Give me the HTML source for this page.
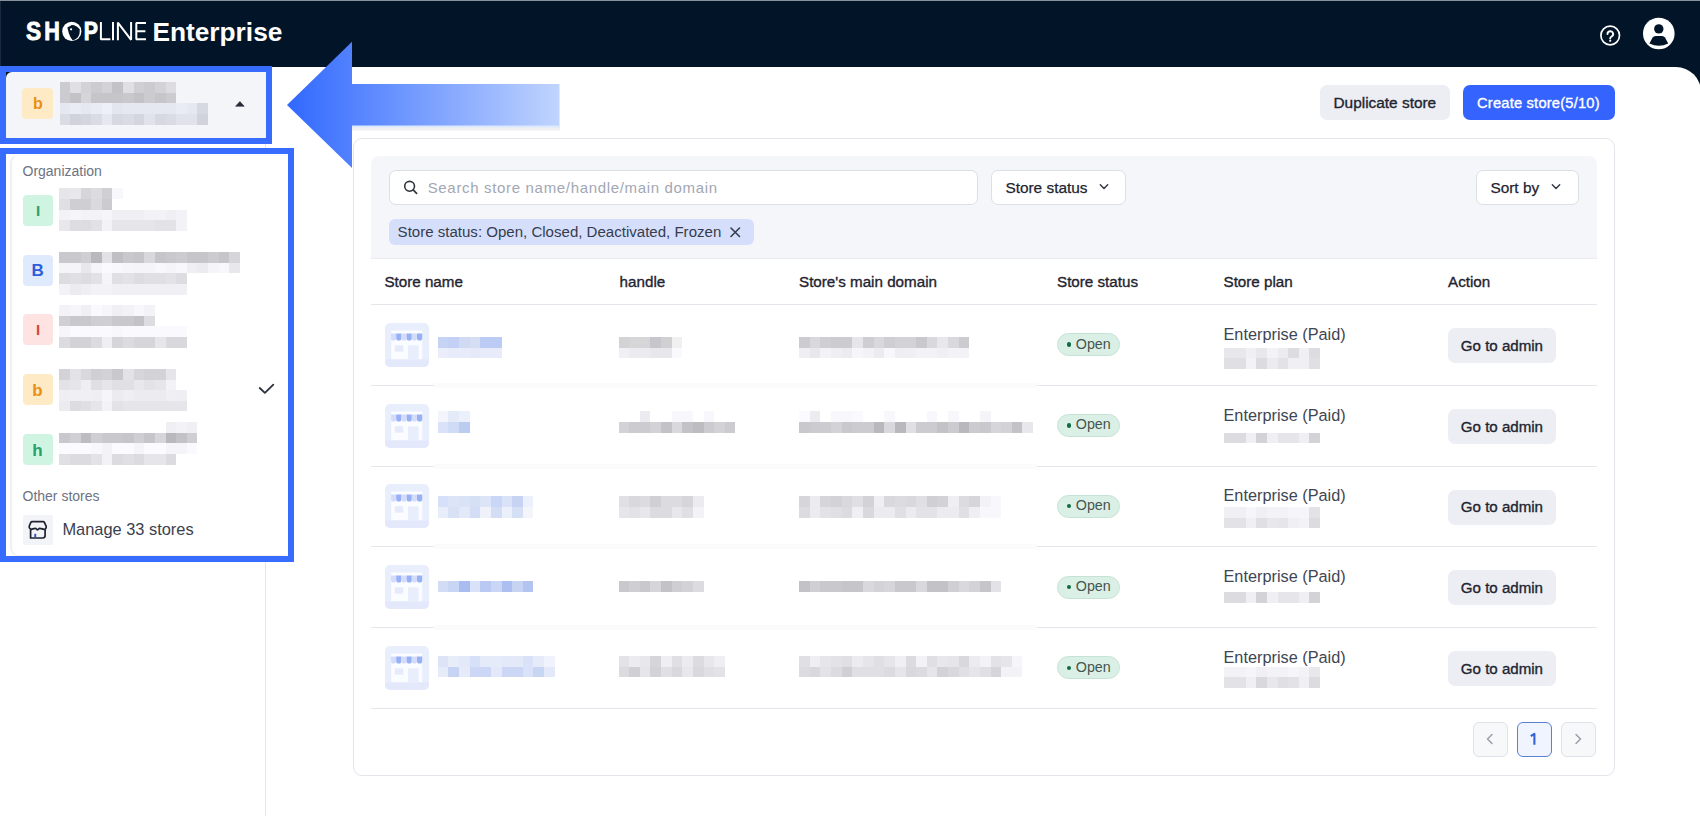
<!DOCTYPE html>
<html><head><meta charset="utf-8"><title>SHOPLINE Enterprise</title>
<style>
html,body{margin:0;padding:0;width:1700px;height:816px;overflow:hidden;background:#fff}
body{position:relative;font-family:"Liberation Sans",sans-serif}
.a,.t,i{position:absolute;display:block}
.t{white-space:nowrap;line-height:1}
i{font-style:normal}
</style></head><body>
<div class="a" style="left:0px;top:0px;width:1700px;height:110px;background:#021427"></div>
<div class="a" style="left:0px;top:0px;width:1700px;height:1px;background:#8a9099"></div>
<div class="a" style="left:0px;top:1px;width:1px;height:65px;background:#1b2940"></div>
<div class="a" style="left:0px;top:66.5px;width:1701px;height:760px;background:#fff;border-radius:8px 25px 0 0"></div>
<svg class="a" style="left:0;top:0" width="300" height="60" viewBox="0 0 300 60">
<g fill="#fff" font-family="Liberation Sans" font-weight="700" font-size="26">
<text x="26" y="40.1" textLength="15.2" lengthAdjust="spacingAndGlyphs" stroke="#fff" stroke-width="0.9">S</text>
<text x="44.3" y="40.1" textLength="15.6" lengthAdjust="spacingAndGlyphs" stroke="#fff" stroke-width="0.9">H</text>
<text x="83.8" y="40.1" textLength="14.2" lengthAdjust="spacingAndGlyphs" stroke="#fff" stroke-width="0.9">P</text>
<text x="152.4" y="40.8" textLength="130" lengthAdjust="spacingAndGlyphs">Enterprise</text>
</g>
<circle cx="71.8" cy="31.4" r="9.6" fill="#fff"/>
<path d="M67.4 27.4 L71.8 25 Q76.8 25.2 79.6 29.2 Q80.4 33.8 77.6 37.6 Q75.2 40 72.6 40.3 L70.4 37 Q68.4 33 67.4 27.4 Z" fill="#021427"/>
<circle cx="71.1" cy="29.3" r="1.1" fill="#fff"/>
<g stroke="#fff" stroke-width="2" fill="none" stroke-linejoin="bevel">
<path d="M100.9 22 V39.3 H110.4"/>
<path d="M113 22 V40.3"/>
<path d="M117.9 40.3 V22.6 L131.1 39.8 V22"/>
<path d="M146 23 H136.3 V39.3 H146 M136.3 31.3 H145.4"/>
</g>
</svg>
<svg class="a" style="left:1590px;top:15px" width="100" height="42" viewBox="1590 15 100 42">
<circle cx="1610.2" cy="35.5" r="9.3" fill="none" stroke="#fff" stroke-width="1.7"/>
<path d="M1607.5 34 a2.8 2.8 0 1 1 4.1 2.5 c-1 .55 -1.4 1.05 -1.4 2" fill="none" stroke="#fff" stroke-width="1.9" stroke-linecap="round"/>
<circle cx="1610.2" cy="40.8" r="1.1" fill="#fff"/>
<circle cx="1658.8" cy="33.5" r="15.8" fill="#fff"/>
<circle cx="1658.8" cy="28.9" r="4.7" fill="#021427"/>
<path d="M1655.6 35.9 H1662 Q1664 35.9 1665 37.6 L1668.2 43.4 Q1659 48 1649.4 43.4 L1652.6 37.6 Q1653.6 35.9 1655.6 35.9 Z" fill="#021427"/>
</svg>
<div class="a" style="left:265px;top:143px;width:1px;height:673px;background:#e4e6eb"></div>
<div class="a" style="left:6px;top:72px;width:8px;height:8px;background:#021427"></div>
<div class="a" style="left:6px;top:72px;width:260px;height:66.5px;background:#f4f5f9;border-top-left-radius:6px"></div>
<div class="a" style="left:22px;top:88px;width:31px;height:31px;background:#feeac5;border-radius:4px"></div>
<span class="t" style="left:33px;top:96.26px;font-size:16px;color:#e98e16;font-weight:700;">b</span>
<i style="left:60px;top:82px;width:10px;height:11px;background:#cbcbd0"></i>
<i style="left:70px;top:82px;width:11px;height:11px;background:#dfdfe4"></i>
<i style="left:81px;top:82px;width:10px;height:11px;background:#d2d2d7"></i>
<i style="left:91px;top:82px;width:11px;height:11px;background:#cbcbd0"></i>
<i style="left:102px;top:82px;width:10px;height:11px;background:#d2d2d7"></i>
<i style="left:112px;top:82px;width:11px;height:11px;background:#c2c2c7"></i>
<i style="left:123px;top:82px;width:11px;height:11px;background:#dfdfe4"></i>
<i style="left:134px;top:82px;width:10px;height:11px;background:#cfcfd4"></i>
<i style="left:144px;top:82px;width:11px;height:11px;background:#cbcbd0"></i>
<i style="left:155px;top:82px;width:11px;height:11px;background:#d2d2d7"></i>
<i style="left:166px;top:82px;width:10px;height:11px;background:#dcdce1"></i>
<i style="left:60px;top:93px;width:10px;height:10px;background:#cbcbd0"></i>
<i style="left:70px;top:93px;width:11px;height:10px;background:#c2c2c7"></i>
<i style="left:81px;top:93px;width:10px;height:10px;background:#d5d5da"></i>
<i style="left:91px;top:93px;width:11px;height:10px;background:#c5c5ca"></i>
<i style="left:102px;top:93px;width:10px;height:10px;background:#c5c5ca"></i>
<i style="left:112px;top:93px;width:11px;height:10px;background:#c5c5ca"></i>
<i style="left:123px;top:93px;width:11px;height:10px;background:#c8c8cd"></i>
<i style="left:134px;top:93px;width:10px;height:10px;background:#c2c2c7"></i>
<i style="left:144px;top:93px;width:11px;height:10px;background:#cbcbd0"></i>
<i style="left:155px;top:93px;width:11px;height:10px;background:#c5c5ca"></i>
<i style="left:166px;top:93px;width:10px;height:10px;background:#cbcbd0"></i>
<i style="left:60px;top:103px;width:10px;height:11px;background:#e5e8f1"></i>
<i style="left:70px;top:103px;width:11px;height:11px;background:#e9ecf5"></i>
<i style="left:81px;top:103px;width:10px;height:11px;background:#e5e8f1"></i>
<i style="left:91px;top:103px;width:11px;height:11px;background:#e9ecf5"></i>
<i style="left:102px;top:103px;width:10px;height:11px;background:#edf0f9"></i>
<i style="left:112px;top:103px;width:11px;height:11px;background:#e3e6ef"></i>
<i style="left:123px;top:103px;width:11px;height:11px;background:#e5e8f1"></i>
<i style="left:134px;top:103px;width:10px;height:11px;background:#e5e8f1"></i>
<i style="left:144px;top:103px;width:11px;height:11px;background:#e5e8f1"></i>
<i style="left:155px;top:103px;width:11px;height:11px;background:#e5e8f1"></i>
<i style="left:166px;top:103px;width:10px;height:11px;background:#e5e8f1"></i>
<i style="left:176px;top:103px;width:11px;height:11px;background:#e9ecf5"></i>
<i style="left:187px;top:103px;width:10px;height:11px;background:#e5e8f1"></i>
<i style="left:197px;top:103px;width:11px;height:11px;background:#d6d9e2"></i>
<i style="left:60px;top:114px;width:10px;height:11px;background:#d9dce5"></i>
<i style="left:70px;top:114px;width:11px;height:11px;background:#d0d3dc"></i>
<i style="left:81px;top:114px;width:10px;height:11px;background:#d3d6df"></i>
<i style="left:91px;top:114px;width:11px;height:11px;background:#d9dce5"></i>
<i style="left:102px;top:114px;width:10px;height:11px;background:#e5e8f1"></i>
<i style="left:112px;top:114px;width:11px;height:11px;background:#d6d9e2"></i>
<i style="left:123px;top:114px;width:11px;height:11px;background:#d9dce5"></i>
<i style="left:134px;top:114px;width:10px;height:11px;background:#d3d6df"></i>
<i style="left:144px;top:114px;width:11px;height:11px;background:#e0e3ec"></i>
<i style="left:155px;top:114px;width:11px;height:11px;background:#d6d9e2"></i>
<i style="left:166px;top:114px;width:10px;height:11px;background:#d9dce5"></i>
<i style="left:176px;top:114px;width:11px;height:11px;background:#e0e3ec"></i>
<i style="left:187px;top:114px;width:10px;height:11px;background:#e0e3ec"></i>
<i style="left:197px;top:114px;width:11px;height:11px;background:#d0d3dc"></i>
<svg class="a" style="left:233px;top:98px" width="14" height="12"><path d="M2.6 8.2 L6.9 3.6 L11.2 8.2 Z" fill="#252a36" stroke="#252a36" stroke-width="0.6" stroke-linejoin="round"/></svg>
<div class="a" style="left:0px;top:66px;width:272px;height:78px;border:6px solid #376cfe;box-sizing:border-box"></div>
<div class="a" style="left:6px;top:154px;width:282px;height:402px;background:#fff"></div>
<div class="a" style="left:9.5px;top:155px;width:281px;height:401px;border-left:2px solid #f0f0f2;border-top:1px solid #f8f8f9;border-bottom:1.5px solid #f1f1f3;border-radius:8px 0 8px 8px;box-sizing:border-box"></div>
<span class="t" style="left:22.5px;top:164.15px;font-size:14px;color:#6d7382;font-weight:400;letter-spacing:0px">Organization</span>
<div class="a" style="left:22.5px;top:195px;width:30.5px;height:30.5px;background:#cff5e2;border-radius:4px"></div>
<div class="a" style="left:22.5px;top:255px;width:30.5px;height:30.5px;background:#dfeafd;border-radius:4px"></div>
<div class="a" style="left:22.5px;top:314px;width:30.5px;height:30.5px;background:#fde3e2;border-radius:4px"></div>
<div class="a" style="left:22.5px;top:374px;width:30.5px;height:30.5px;background:#feeac5;border-radius:4px"></div>
<div class="a" style="left:22.5px;top:434px;width:30.5px;height:30.5px;background:#cff5e2;border-radius:4px"></div>
<span class="t" style="left:36px;top:202.60px;font-size:15px;color:#2e9e6a;font-weight:700;">I</span>
<span class="t" style="left:31.4px;top:261.91px;font-size:17px;color:#2d5fd8;font-weight:700;">B</span>
<span class="t" style="left:36px;top:322.30px;font-size:15px;color:#d8473a;font-weight:700;">I</span>
<span class="t" style="left:32.3px;top:381.61px;font-size:17px;color:#e98e16;font-weight:700;">b</span>
<span class="t" style="left:32.3px;top:441.61px;font-size:17px;color:#27a069;font-weight:700;">h</span>
<i style="left:59px;top:188px;width:11px;height:11px;background:#e5e5ea"></i>
<i style="left:70px;top:188px;width:11px;height:11px;background:#e7e7ec"></i>
<i style="left:81px;top:188px;width:10px;height:11px;background:#d5d5da"></i>
<i style="left:91px;top:188px;width:11px;height:11px;background:#dbdbe0"></i>
<i style="left:102px;top:188px;width:10px;height:11px;background:#cfcfd4"></i>
<i style="left:112px;top:188px;width:11px;height:11px;background:#f7f7fc"></i>
<i style="left:59px;top:199px;width:11px;height:11px;background:#dfdfe4"></i>
<i style="left:70px;top:199px;width:11px;height:11px;background:#ceced3"></i>
<i style="left:81px;top:199px;width:10px;height:11px;background:#ceced3"></i>
<i style="left:91px;top:199px;width:11px;height:11px;background:#d9d9de"></i>
<i style="left:102px;top:199px;width:10px;height:11px;background:#cbcbd0"></i>
<i style="left:59px;top:210px;width:11px;height:10px;background:#f2f2f7"></i>
<i style="left:70px;top:210px;width:11px;height:10px;background:#f5f5fa"></i>
<i style="left:81px;top:210px;width:10px;height:10px;background:#f2f2f7"></i>
<i style="left:91px;top:210px;width:11px;height:10px;background:#f2f2f7"></i>
<i style="left:102px;top:210px;width:10px;height:10px;background:#f5f5fa"></i>
<i style="left:112px;top:210px;width:11px;height:10px;background:#efeff4"></i>
<i style="left:123px;top:210px;width:11px;height:10px;background:#efeff4"></i>
<i style="left:134px;top:210px;width:10px;height:10px;background:#efeff4"></i>
<i style="left:144px;top:210px;width:11px;height:10px;background:#f2f2f7"></i>
<i style="left:155px;top:210px;width:11px;height:10px;background:#f2f2f7"></i>
<i style="left:166px;top:210px;width:10px;height:10px;background:#efeff4"></i>
<i style="left:176px;top:210px;width:11px;height:10px;background:#f2f2f7"></i>
<i style="left:59px;top:220px;width:11px;height:11px;background:#e7e7ec"></i>
<i style="left:70px;top:220px;width:11px;height:11px;background:#dcdce1"></i>
<i style="left:81px;top:220px;width:10px;height:11px;background:#dcdce1"></i>
<i style="left:91px;top:220px;width:11px;height:11px;background:#e1e1e6"></i>
<i style="left:102px;top:220px;width:10px;height:11px;background:#f2f2f7"></i>
<i style="left:112px;top:220px;width:11px;height:11px;background:#e5e5ea"></i>
<i style="left:123px;top:220px;width:11px;height:11px;background:#e5e5ea"></i>
<i style="left:134px;top:220px;width:10px;height:11px;background:#e5e5ea"></i>
<i style="left:144px;top:220px;width:11px;height:11px;background:#e5e5ea"></i>
<i style="left:155px;top:220px;width:11px;height:11px;background:#e2e2e7"></i>
<i style="left:166px;top:220px;width:10px;height:11px;background:#e2e2e7"></i>
<i style="left:176px;top:220px;width:11px;height:11px;background:#f2f2f7"></i>
<i style="left:59px;top:252px;width:11px;height:11px;background:#c8c8cd"></i>
<i style="left:70px;top:252px;width:11px;height:11px;background:#c8c8cd"></i>
<i style="left:81px;top:252px;width:10px;height:11px;background:#ceced3"></i>
<i style="left:91px;top:252px;width:11px;height:11px;background:#b8b8bd"></i>
<i style="left:102px;top:252px;width:10px;height:11px;background:#e1e1e6"></i>
<i style="left:112px;top:252px;width:11px;height:11px;background:#bfbfc4"></i>
<i style="left:123px;top:252px;width:11px;height:11px;background:#c8c8cd"></i>
<i style="left:134px;top:252px;width:10px;height:11px;background:#c5c5ca"></i>
<i style="left:144px;top:252px;width:11px;height:11px;background:#d8d8dd"></i>
<i style="left:155px;top:252px;width:11px;height:11px;background:#c5c5ca"></i>
<i style="left:166px;top:252px;width:10px;height:11px;background:#c8c8cd"></i>
<i style="left:176px;top:252px;width:11px;height:11px;background:#cbcbd0"></i>
<i style="left:187px;top:252px;width:10px;height:11px;background:#c5c5ca"></i>
<i style="left:197px;top:252px;width:11px;height:11px;background:#c5c5ca"></i>
<i style="left:208px;top:252px;width:11px;height:11px;background:#cbcbd0"></i>
<i style="left:219px;top:252px;width:10px;height:11px;background:#c5c5ca"></i>
<i style="left:229px;top:252px;width:11px;height:11px;background:#d5d5da"></i>
<i style="left:59px;top:263px;width:11px;height:10px;background:#f4f4f9"></i>
<i style="left:70px;top:263px;width:11px;height:10px;background:#f4f4f9"></i>
<i style="left:81px;top:263px;width:10px;height:10px;background:#e7e7ec"></i>
<i style="left:91px;top:263px;width:11px;height:10px;background:#f4f4f9"></i>
<i style="left:102px;top:263px;width:10px;height:10px;background:#f9f9fe"></i>
<i style="left:112px;top:263px;width:11px;height:10px;background:#f7f7fc"></i>
<i style="left:123px;top:263px;width:11px;height:10px;background:#f5f5fa"></i>
<i style="left:134px;top:263px;width:10px;height:10px;background:#f4f4f9"></i>
<i style="left:144px;top:263px;width:11px;height:10px;background:#f4f4f9"></i>
<i style="left:155px;top:263px;width:11px;height:10px;background:#f7f7fc"></i>
<i style="left:166px;top:263px;width:10px;height:10px;background:#f4f4f9"></i>
<i style="left:176px;top:263px;width:11px;height:10px;background:#f7f7fc"></i>
<i style="left:187px;top:263px;width:10px;height:10px;background:#efeff4"></i>
<i style="left:197px;top:263px;width:11px;height:10px;background:#ebebf0"></i>
<i style="left:208px;top:263px;width:11px;height:10px;background:#f4f4f9"></i>
<i style="left:219px;top:263px;width:10px;height:10px;background:#f7f7fc"></i>
<i style="left:229px;top:263px;width:11px;height:10px;background:#e7e7ec"></i>
<i style="left:59px;top:273px;width:11px;height:11px;background:#dcdce1"></i>
<i style="left:70px;top:273px;width:11px;height:11px;background:#dfdfe4"></i>
<i style="left:81px;top:273px;width:10px;height:11px;background:#dcdce1"></i>
<i style="left:91px;top:273px;width:11px;height:11px;background:#e1e1e6"></i>
<i style="left:102px;top:273px;width:10px;height:11px;background:#f4f4f9"></i>
<i style="left:112px;top:273px;width:11px;height:11px;background:#dfdfe4"></i>
<i style="left:123px;top:273px;width:11px;height:11px;background:#e2e2e7"></i>
<i style="left:134px;top:273px;width:10px;height:11px;background:#dcdce1"></i>
<i style="left:144px;top:273px;width:11px;height:11px;background:#dfdfe4"></i>
<i style="left:155px;top:273px;width:11px;height:11px;background:#dfdfe4"></i>
<i style="left:166px;top:273px;width:10px;height:11px;background:#e2e2e7"></i>
<i style="left:176px;top:273px;width:11px;height:11px;background:#dcdce1"></i>
<i style="left:59px;top:284px;width:11px;height:11px;background:#f2f2f7"></i>
<i style="left:70px;top:284px;width:11px;height:11px;background:#ebebf0"></i>
<i style="left:81px;top:284px;width:10px;height:11px;background:#eeeef3"></i>
<i style="left:91px;top:284px;width:11px;height:11px;background:#f2f2f7"></i>
<i style="left:102px;top:284px;width:10px;height:11px;background:#f2f2f7"></i>
<i style="left:112px;top:284px;width:11px;height:11px;background:#efeff4"></i>
<i style="left:123px;top:284px;width:11px;height:11px;background:#efeff4"></i>
<i style="left:134px;top:284px;width:10px;height:11px;background:#efeff4"></i>
<i style="left:144px;top:284px;width:11px;height:11px;background:#efeff4"></i>
<i style="left:155px;top:284px;width:11px;height:11px;background:#efeff4"></i>
<i style="left:166px;top:284px;width:10px;height:11px;background:#efeff4"></i>
<i style="left:176px;top:284px;width:11px;height:11px;background:#efeff4"></i>
<i style="left:59px;top:305px;width:11px;height:11px;background:#f2f2f7"></i>
<i style="left:70px;top:305px;width:11px;height:11px;background:#f5f5fa"></i>
<i style="left:81px;top:305px;width:10px;height:11px;background:#efeff4"></i>
<i style="left:91px;top:305px;width:11px;height:11px;background:#f9f9fe"></i>
<i style="left:102px;top:305px;width:10px;height:11px;background:#f5f5fa"></i>
<i style="left:112px;top:305px;width:11px;height:11px;background:#efeff4"></i>
<i style="left:123px;top:305px;width:11px;height:11px;background:#f2f2f7"></i>
<i style="left:134px;top:305px;width:10px;height:11px;background:#f7f7fc"></i>
<i style="left:144px;top:305px;width:11px;height:11px;background:#f2f2f7"></i>
<i style="left:59px;top:316px;width:11px;height:10px;background:#cfcfd4"></i>
<i style="left:70px;top:316px;width:11px;height:10px;background:#c8c8cd"></i>
<i style="left:81px;top:316px;width:10px;height:10px;background:#c8c8cd"></i>
<i style="left:91px;top:316px;width:11px;height:10px;background:#ceced3"></i>
<i style="left:102px;top:316px;width:10px;height:10px;background:#cfcfd4"></i>
<i style="left:112px;top:316px;width:11px;height:10px;background:#c8c8cd"></i>
<i style="left:123px;top:316px;width:11px;height:10px;background:#c8c8cd"></i>
<i style="left:134px;top:316px;width:10px;height:10px;background:#c2c2c7"></i>
<i style="left:144px;top:316px;width:11px;height:10px;background:#dcdce1"></i>
<i style="left:59px;top:326px;width:11px;height:11px;background:#f5f5fa"></i>
<i style="left:70px;top:326px;width:11px;height:11px;background:#fbfbff"></i>
<i style="left:81px;top:326px;width:10px;height:11px;background:#f9f9fe"></i>
<i style="left:91px;top:326px;width:11px;height:11px;background:#f9f9fe"></i>
<i style="left:102px;top:326px;width:10px;height:11px;background:#f9f9fe"></i>
<i style="left:112px;top:326px;width:11px;height:11px;background:#f7f7fc"></i>
<i style="left:123px;top:326px;width:11px;height:11px;background:#f9f9fe"></i>
<i style="left:134px;top:326px;width:10px;height:11px;background:#f9f9fe"></i>
<i style="left:144px;top:326px;width:11px;height:11px;background:#f9f9fe"></i>
<i style="left:155px;top:326px;width:11px;height:11px;background:#f9f9fe"></i>
<i style="left:166px;top:326px;width:10px;height:11px;background:#f9f9fe"></i>
<i style="left:176px;top:326px;width:11px;height:11px;background:#f9f9fe"></i>
<i style="left:59px;top:337px;width:11px;height:11px;background:#dbdbe0"></i>
<i style="left:70px;top:337px;width:11px;height:11px;background:#d2d2d7"></i>
<i style="left:81px;top:337px;width:10px;height:11px;background:#d2d2d7"></i>
<i style="left:91px;top:337px;width:11px;height:11px;background:#dbdbe0"></i>
<i style="left:102px;top:337px;width:10px;height:11px;background:#eeeef3"></i>
<i style="left:112px;top:337px;width:11px;height:11px;background:#d5d5da"></i>
<i style="left:123px;top:337px;width:11px;height:11px;background:#dbdbe0"></i>
<i style="left:134px;top:337px;width:10px;height:11px;background:#d5d5da"></i>
<i style="left:144px;top:337px;width:11px;height:11px;background:#d5d5da"></i>
<i style="left:155px;top:337px;width:11px;height:11px;background:#e5e5ea"></i>
<i style="left:166px;top:337px;width:10px;height:11px;background:#d8d8dd"></i>
<i style="left:176px;top:337px;width:11px;height:11px;background:#d8d8dd"></i>
<i style="left:59px;top:369px;width:11px;height:11px;background:#d2d2d7"></i>
<i style="left:70px;top:369px;width:11px;height:11px;background:#e2e2e7"></i>
<i style="left:81px;top:369px;width:10px;height:11px;background:#d8d8dd"></i>
<i style="left:91px;top:369px;width:11px;height:11px;background:#cfcfd4"></i>
<i style="left:102px;top:369px;width:10px;height:11px;background:#d2d2d7"></i>
<i style="left:112px;top:369px;width:11px;height:11px;background:#c8c8cd"></i>
<i style="left:123px;top:369px;width:11px;height:11px;background:#e2e2e7"></i>
<i style="left:134px;top:369px;width:10px;height:11px;background:#d5d5da"></i>
<i style="left:144px;top:369px;width:11px;height:11px;background:#d2d2d7"></i>
<i style="left:155px;top:369px;width:11px;height:11px;background:#d2d2d7"></i>
<i style="left:166px;top:369px;width:10px;height:11px;background:#e5e5ea"></i>
<i style="left:59px;top:380px;width:11px;height:10px;background:#e2e2e7"></i>
<i style="left:70px;top:380px;width:11px;height:10px;background:#e5e5ea"></i>
<i style="left:81px;top:380px;width:10px;height:10px;background:#eeeef3"></i>
<i style="left:91px;top:380px;width:11px;height:10px;background:#dfdfe4"></i>
<i style="left:102px;top:380px;width:10px;height:10px;background:#e5e5ea"></i>
<i style="left:112px;top:380px;width:11px;height:10px;background:#dfdfe4"></i>
<i style="left:123px;top:380px;width:11px;height:10px;background:#dfdfe4"></i>
<i style="left:134px;top:380px;width:10px;height:10px;background:#e7e7ec"></i>
<i style="left:144px;top:380px;width:11px;height:10px;background:#e2e2e7"></i>
<i style="left:155px;top:380px;width:11px;height:10px;background:#e5e5ea"></i>
<i style="left:166px;top:380px;width:10px;height:10px;background:#f2f2f7"></i>
<i style="left:59px;top:390px;width:11px;height:11px;background:#eeeef3"></i>
<i style="left:70px;top:390px;width:11px;height:11px;background:#efeff4"></i>
<i style="left:81px;top:390px;width:10px;height:11px;background:#efeff4"></i>
<i style="left:91px;top:390px;width:11px;height:11px;background:#eeeef3"></i>
<i style="left:102px;top:390px;width:10px;height:11px;background:#f5f5fa"></i>
<i style="left:112px;top:390px;width:11px;height:11px;background:#ebebf0"></i>
<i style="left:123px;top:390px;width:11px;height:11px;background:#eeeef3"></i>
<i style="left:134px;top:390px;width:10px;height:11px;background:#ebebf0"></i>
<i style="left:144px;top:390px;width:11px;height:11px;background:#ebebf0"></i>
<i style="left:155px;top:390px;width:11px;height:11px;background:#ebebf0"></i>
<i style="left:166px;top:390px;width:10px;height:11px;background:#efeff4"></i>
<i style="left:176px;top:390px;width:11px;height:11px;background:#eeeef3"></i>
<i style="left:59px;top:401px;width:11px;height:10px;background:#ebebf0"></i>
<i style="left:70px;top:401px;width:11px;height:10px;background:#dcdce1"></i>
<i style="left:81px;top:401px;width:10px;height:10px;background:#dfdfe4"></i>
<i style="left:91px;top:401px;width:11px;height:10px;background:#e5e5ea"></i>
<i style="left:102px;top:401px;width:10px;height:10px;background:#f2f2f7"></i>
<i style="left:112px;top:401px;width:11px;height:10px;background:#e2e2e7"></i>
<i style="left:123px;top:401px;width:11px;height:10px;background:#e5e5ea"></i>
<i style="left:134px;top:401px;width:10px;height:10px;background:#e5e5ea"></i>
<i style="left:144px;top:401px;width:11px;height:10px;background:#e5e5ea"></i>
<i style="left:155px;top:401px;width:11px;height:10px;background:#e5e5ea"></i>
<i style="left:166px;top:401px;width:10px;height:10px;background:#e5e5ea"></i>
<i style="left:176px;top:401px;width:11px;height:10px;background:#e5e5ea"></i>
<i style="left:166px;top:422px;width:10px;height:11px;background:#efeff4"></i>
<i style="left:176px;top:422px;width:11px;height:11px;background:#f2f2f7"></i>
<i style="left:187px;top:422px;width:10px;height:11px;background:#efeff4"></i>
<i style="left:59px;top:433px;width:11px;height:10px;background:#c8c8cd"></i>
<i style="left:70px;top:433px;width:11px;height:10px;background:#cfcfd4"></i>
<i style="left:81px;top:433px;width:10px;height:10px;background:#bcbcc1"></i>
<i style="left:91px;top:433px;width:11px;height:10px;background:#ceced3"></i>
<i style="left:102px;top:433px;width:10px;height:10px;background:#c8c8cd"></i>
<i style="left:112px;top:433px;width:11px;height:10px;background:#c8c8cd"></i>
<i style="left:123px;top:433px;width:11px;height:10px;background:#c5c5ca"></i>
<i style="left:134px;top:433px;width:10px;height:10px;background:#ceced3"></i>
<i style="left:144px;top:433px;width:11px;height:10px;background:#c5c5ca"></i>
<i style="left:155px;top:433px;width:11px;height:10px;background:#d5d5da"></i>
<i style="left:166px;top:433px;width:10px;height:10px;background:#b8b8bd"></i>
<i style="left:176px;top:433px;width:11px;height:10px;background:#c2c2c7"></i>
<i style="left:187px;top:433px;width:10px;height:10px;background:#ceced3"></i>
<i style="left:59px;top:443px;width:11px;height:11px;background:#fbfbff"></i>
<i style="left:70px;top:443px;width:11px;height:11px;background:#fbfbff"></i>
<i style="left:81px;top:443px;width:10px;height:11px;background:#fbfbff"></i>
<i style="left:91px;top:443px;width:11px;height:11px;background:#f7f7fc"></i>
<i style="left:102px;top:443px;width:10px;height:11px;background:#f2f2f7"></i>
<i style="left:112px;top:443px;width:11px;height:11px;background:#fbfbff"></i>
<i style="left:123px;top:443px;width:11px;height:11px;background:#fbfbff"></i>
<i style="left:134px;top:443px;width:10px;height:11px;background:#f4f4f9"></i>
<i style="left:144px;top:443px;width:11px;height:11px;background:#fbfbff"></i>
<i style="left:155px;top:443px;width:11px;height:11px;background:#fbfbff"></i>
<i style="left:166px;top:443px;width:10px;height:11px;background:#f4f4f9"></i>
<i style="left:176px;top:443px;width:11px;height:11px;background:#f4f4f9"></i>
<i style="left:187px;top:443px;width:10px;height:11px;background:#f9f9fe"></i>
<i style="left:59px;top:454px;width:11px;height:11px;background:#dfdfe4"></i>
<i style="left:70px;top:454px;width:11px;height:11px;background:#dbdbe0"></i>
<i style="left:81px;top:454px;width:10px;height:11px;background:#dbdbe0"></i>
<i style="left:91px;top:454px;width:11px;height:11px;background:#e2e2e7"></i>
<i style="left:102px;top:454px;width:10px;height:11px;background:#f2f2f7"></i>
<i style="left:112px;top:454px;width:11px;height:11px;background:#dbdbe0"></i>
<i style="left:123px;top:454px;width:11px;height:11px;background:#dfdfe4"></i>
<i style="left:134px;top:454px;width:10px;height:11px;background:#dbdbe0"></i>
<i style="left:144px;top:454px;width:11px;height:11px;background:#e5e5ea"></i>
<i style="left:155px;top:454px;width:11px;height:11px;background:#e5e5ea"></i>
<i style="left:166px;top:454px;width:10px;height:11px;background:#dbdbe0"></i>
<svg class="a" style="left:255px;top:380px" width="22" height="18"><path d="M4.7 8 L9.9 12.9 L18.3 4.7" fill="none" stroke="#2b303b" stroke-width="1.8" stroke-linecap="round" stroke-linejoin="round"/></svg>
<span class="t" style="left:22.5px;top:489.45px;font-size:14px;color:#6d7382;font-weight:400;">Other stores</span>
<div class="a" style="left:22.5px;top:515px;width:30.5px;height:30px;background:#f3f4f8;border-radius:2px"></div>
<svg class="a" style="left:23px;top:515px" width="30" height="30" viewBox="0 0 30 30">
<path d="M9.2 6.6 H20 Q21 6.6 21.5 7.6 L23.2 11.3 Q23.7 13 22.1 14.3 V20.6 Q22.1 23 19.6 23 H7.6 V14.3 Q5.7 13 6.2 11.3 L7.7 7.6 Q8.2 6.6 9.2 6.6 Z" fill="none" stroke="#1e2330" stroke-width="1.7" stroke-linejoin="round"/>
<path d="M7.3 14.5 C9 14.5 10.5 13.3 12.2 13.3 C13.4 13.3 13.8 15 14.5 15 C15.2 15 15.6 13.3 16.8 13.3 C18.5 13.3 20.2 14.5 22.3 14.5" fill="none" stroke="#1e2330" stroke-width="1.7"/>
<rect x="11.3" y="18.8" width="1.9" height="4" fill="#2d4fc8"/>
</svg>
<span class="t" style="left:62.4px;top:521.12px;font-size:16.4px;color:#3a404e;font-weight:400;">Manage 33 stores</span>
<div class="a" style="left:0px;top:148px;width:294px;height:414px;border:6px solid #376cfe;box-sizing:border-box"></div>
<div class="a" style="left:1320px;top:85px;width:130px;height:35px;background:#eceef4;border-radius:7px"></div>
<span class="t" style="left:1333.5px;top:95.16px;font-size:15.4px;color:#1f2430;font-weight:400;-webkit-text-stroke:0.35px #1f2430">Duplicate store</span>
<div class="a" style="left:1463px;top:85px;width:152px;height:35px;background:#3463fe;border-radius:7px"></div>
<span class="t" style="left:1477px;top:95.76px;font-size:14.7px;color:#fff;font-weight:400;-webkit-text-stroke:0.35px #fff;letter-spacing:0.2px">Create store(5/10)</span>
<div class="a" style="left:353px;top:138px;width:1262px;height:638px;border:1.5px solid #e3e5ea;border-radius:9px;box-sizing:border-box;background:#fff"></div>
<div class="a" style="left:371px;top:156px;width:1226px;height:102px;background:#f5f6fa;border-radius:8px 8px 0 0"></div>
<div class="a" style="left:389px;top:170px;width:589px;height:35px;background:#fff;border:1.5px solid #dcdfe6;border-radius:7px;box-sizing:border-box"></div>
<svg class="a" style="left:398px;top:175px" width="26" height="26"><circle cx="11.6" cy="11.3" r="4.9" fill="none" stroke="#30343e" stroke-width="1.6"/><path d="M15.2 14.9 L18.6 18.3" stroke="#30343e" stroke-width="1.7" stroke-linecap="round"/></svg>
<span class="t" style="left:427.7px;top:180.10px;font-size:15px;color:#a2a7b3;font-weight:400;letter-spacing:0.67px">Search store name/handle/main domain</span>
<div class="a" style="left:991px;top:169.5px;width:135px;height:35.5px;background:#fff;border:1.5px solid #dcdfe6;border-radius:7px;box-sizing:border-box"></div>
<span class="t" style="left:1005.4px;top:179.86px;font-size:15.4px;color:#1f2430;font-weight:400;-webkit-text-stroke:0.25px #1f2430">Store status</span>
<svg class="a" style="left:1096px;top:180px" width="16" height="14"><path d="M4.3 4.8 L8 8.5 L11.7 4.8" fill="none" stroke="#30343e" stroke-width="1.4" stroke-linecap="round" stroke-linejoin="round"/></svg>
<div class="a" style="left:1475.5px;top:169.5px;width:103px;height:35.5px;background:#fff;border:1.5px solid #dcdfe6;border-radius:7px;box-sizing:border-box"></div>
<span class="t" style="left:1490.4px;top:179.86px;font-size:15.4px;color:#1f2430;font-weight:400;-webkit-text-stroke:0.25px #1f2430">Sort by</span>
<svg class="a" style="left:1548px;top:180px" width="16" height="14"><path d="M4.3 4.8 L8 8.5 L11.7 4.8" fill="none" stroke="#30343e" stroke-width="1.4" stroke-linecap="round" stroke-linejoin="round"/></svg>
<div class="a" style="left:389px;top:219px;width:365px;height:26px;background:#d5dffc;border-radius:6px"></div>
<span class="t" style="left:397.6px;top:224.06px;font-size:15.05px;color:#363c4c;font-weight:400;">Store status: Open, Closed, Deactivated, Frozen</span>
<svg class="a" style="left:726px;top:223px" width="18" height="18"><path d="M5 5 L13.5 13.5 M13.5 5 L5 13.5" stroke="#383e4c" stroke-width="1.6" stroke-linecap="round"/></svg>
<span class="t" style="left:384.4px;top:274.43px;font-size:15.2px;color:#1f2430;font-weight:400;-webkit-text-stroke:0.35px #1f2430">Store name</span>
<span class="t" style="left:619.6px;top:274.43px;font-size:15.2px;color:#1f2430;font-weight:400;-webkit-text-stroke:0.35px #1f2430">handle</span>
<span class="t" style="left:799px;top:274.43px;font-size:15.2px;color:#1f2430;font-weight:400;-webkit-text-stroke:0.35px #1f2430">Store's main domain</span>
<span class="t" style="left:1057px;top:274.43px;font-size:15.2px;color:#1f2430;font-weight:400;-webkit-text-stroke:0.35px #1f2430">Store status</span>
<span class="t" style="left:1223.5px;top:274.43px;font-size:15.2px;color:#1f2430;font-weight:400;-webkit-text-stroke:0.35px #1f2430">Store plan</span>
<span class="t" style="left:1448px;top:274.43px;font-size:15.2px;color:#1f2430;font-weight:400;-webkit-text-stroke:0.35px #1f2430">Action</span>
<div class="a" style="left:371px;top:258px;width:1226px;height:1px;background:#e9ebef"></div>
<div class="a" style="left:371px;top:304px;width:1226px;height:1px;background:#e4e6eb"></div>
<div class="a" style="left:371px;top:385px;width:63px;height:1px;background:#e4e6eb"></div>
<div class="a" style="left:434px;top:383px;width:603px;height:5px;background:#fbfbfc"></div>
<div class="a" style="left:1037px;top:385px;width:560px;height:1px;background:#e4e6eb"></div>
<div class="a" style="left:371px;top:466px;width:63px;height:1px;background:#e4e6eb"></div>
<div class="a" style="left:434px;top:464px;width:603px;height:5px;background:#fbfbfc"></div>
<div class="a" style="left:1037px;top:466px;width:560px;height:1px;background:#e4e6eb"></div>
<div class="a" style="left:371px;top:546px;width:63px;height:1px;background:#e4e6eb"></div>
<div class="a" style="left:434px;top:544px;width:603px;height:5px;background:#fbfbfc"></div>
<div class="a" style="left:1037px;top:546px;width:560px;height:1px;background:#e4e6eb"></div>
<div class="a" style="left:371px;top:627px;width:63px;height:1px;background:#e4e6eb"></div>
<div class="a" style="left:434px;top:625px;width:603px;height:5px;background:#fbfbfc"></div>
<div class="a" style="left:1037px;top:627px;width:560px;height:1px;background:#e4e6eb"></div>
<div class="a" style="left:371px;top:708px;width:1226px;height:1px;background:#e4e6eb"></div>
<svg class="a" style="left:384.5px;top:323px" width="44" height="44" viewBox="0 0 44 44">
<defs><clipPath id="ic323"><rect x="0" y="0" width="44" height="44" rx="5"/></clipPath></defs>
<g clip-path="url(#ic323)">
<rect x="0" y="0" width="44" height="44" fill="#e9eefd"/>
<rect x="6.2" y="7.5" width="31" height="29.8" fill="#fbfcff"/>
<rect x="0" y="36.3" width="44" height="7.7" fill="#e3e9fb"/>
</g>
<g>
<path d="M6 10.5 h5.2 v4.5 a2.6 2.6 0 0 1 -5.2 0z" fill="#d3ddfa"/>
<path d="M11.2 10.5 h5.2 v4.5 a2.6 2.6 0 0 1 -5.2 0z" fill="#97b0f6"/>
<path d="M16.4 10.5 h5.2 v4.5 a2.6 2.6 0 0 1 -5.2 0z" fill="#d3ddfa"/>
<path d="M21.6 10.5 h5.2 v4.5 a2.6 2.6 0 0 1 -5.2 0z" fill="#97b0f6"/>
<path d="M26.8 10.5 h5.2 v4.5 a2.6 2.6 0 0 1 -5.2 0z" fill="#d3ddfa"/>
<path d="M32 10.5 h5.2 v4.5 a2.6 2.6 0 0 1 -5.2 0z" fill="#97b0f6"/>
</g>
<rect x="9.8" y="22.3" width="8.5" height="6.3" fill="#e6ebfb"/>
<rect x="23" y="22.3" width="10.7" height="14.5" fill="#e9eefc"/>
</svg>
<div class="a" style="left:1057px;top:333px;width:63px;height:22.5px;background:#daf0e6;border:1px solid #c5e3d5;border-radius:12px;box-sizing:border-box"></div>
<div class="a" style="left:1066.5px;top:342.3px;width:4.5px;height:4.5px;background:#0e6b43;border-radius:50%"></div>
<span class="t" style="left:1075.8px;top:336.50px;font-size:14.3px;color:#46544e;font-weight:400;">Open</span>
<span class="t" style="left:1223.5px;top:325.80px;font-size:16.3px;color:#404553;font-weight:400;">Enterprise (Paid)</span>
<div class="a" style="left:1448px;top:328px;width:108px;height:34.5px;background:#eceef4;border-radius:7px"></div>
<span class="t" style="left:1460.8px;top:337.82px;font-size:15.1px;color:#1f2430;font-weight:400;-webkit-text-stroke:0.35px #1f2430">Go to admin</span>
<svg class="a" style="left:384.5px;top:404px" width="44" height="44" viewBox="0 0 44 44">
<defs><clipPath id="ic404"><rect x="0" y="0" width="44" height="44" rx="5"/></clipPath></defs>
<g clip-path="url(#ic404)">
<rect x="0" y="0" width="44" height="44" fill="#e9eefd"/>
<rect x="6.2" y="7.5" width="31" height="29.8" fill="#fbfcff"/>
<rect x="0" y="36.3" width="44" height="7.7" fill="#e3e9fb"/>
</g>
<g>
<path d="M6 10.5 h5.2 v4.5 a2.6 2.6 0 0 1 -5.2 0z" fill="#d3ddfa"/>
<path d="M11.2 10.5 h5.2 v4.5 a2.6 2.6 0 0 1 -5.2 0z" fill="#97b0f6"/>
<path d="M16.4 10.5 h5.2 v4.5 a2.6 2.6 0 0 1 -5.2 0z" fill="#d3ddfa"/>
<path d="M21.6 10.5 h5.2 v4.5 a2.6 2.6 0 0 1 -5.2 0z" fill="#97b0f6"/>
<path d="M26.8 10.5 h5.2 v4.5 a2.6 2.6 0 0 1 -5.2 0z" fill="#d3ddfa"/>
<path d="M32 10.5 h5.2 v4.5 a2.6 2.6 0 0 1 -5.2 0z" fill="#97b0f6"/>
</g>
<rect x="9.8" y="22.3" width="8.5" height="6.3" fill="#e6ebfb"/>
<rect x="23" y="22.3" width="10.7" height="14.5" fill="#e9eefc"/>
</svg>
<div class="a" style="left:1057px;top:414px;width:63px;height:22.5px;background:#daf0e6;border:1px solid #c5e3d5;border-radius:12px;box-sizing:border-box"></div>
<div class="a" style="left:1066.5px;top:423.1px;width:4.5px;height:4.5px;background:#0e6b43;border-radius:50%"></div>
<span class="t" style="left:1075.8px;top:417.30px;font-size:14.3px;color:#46544e;font-weight:400;">Open</span>
<span class="t" style="left:1223.5px;top:406.60px;font-size:16.3px;color:#404553;font-weight:400;">Enterprise (Paid)</span>
<div class="a" style="left:1448px;top:409px;width:108px;height:34.5px;background:#eceef4;border-radius:7px"></div>
<span class="t" style="left:1460.8px;top:418.62px;font-size:15.1px;color:#1f2430;font-weight:400;-webkit-text-stroke:0.35px #1f2430">Go to admin</span>
<svg class="a" style="left:384.5px;top:484px" width="44" height="44" viewBox="0 0 44 44">
<defs><clipPath id="ic484"><rect x="0" y="0" width="44" height="44" rx="5"/></clipPath></defs>
<g clip-path="url(#ic484)">
<rect x="0" y="0" width="44" height="44" fill="#e9eefd"/>
<rect x="6.2" y="7.5" width="31" height="29.8" fill="#fbfcff"/>
<rect x="0" y="36.3" width="44" height="7.7" fill="#e3e9fb"/>
</g>
<g>
<path d="M6 10.5 h5.2 v4.5 a2.6 2.6 0 0 1 -5.2 0z" fill="#d3ddfa"/>
<path d="M11.2 10.5 h5.2 v4.5 a2.6 2.6 0 0 1 -5.2 0z" fill="#97b0f6"/>
<path d="M16.4 10.5 h5.2 v4.5 a2.6 2.6 0 0 1 -5.2 0z" fill="#d3ddfa"/>
<path d="M21.6 10.5 h5.2 v4.5 a2.6 2.6 0 0 1 -5.2 0z" fill="#97b0f6"/>
<path d="M26.8 10.5 h5.2 v4.5 a2.6 2.6 0 0 1 -5.2 0z" fill="#d3ddfa"/>
<path d="M32 10.5 h5.2 v4.5 a2.6 2.6 0 0 1 -5.2 0z" fill="#97b0f6"/>
</g>
<rect x="9.8" y="22.3" width="8.5" height="6.3" fill="#e6ebfb"/>
<rect x="23" y="22.3" width="10.7" height="14.5" fill="#e9eefc"/>
</svg>
<div class="a" style="left:1057px;top:495px;width:63px;height:22.5px;background:#daf0e6;border:1px solid #c5e3d5;border-radius:12px;box-sizing:border-box"></div>
<div class="a" style="left:1066.5px;top:503.9px;width:4.5px;height:4.5px;background:#0e6b43;border-radius:50%"></div>
<span class="t" style="left:1075.8px;top:498.10px;font-size:14.3px;color:#46544e;font-weight:400;">Open</span>
<span class="t" style="left:1223.5px;top:487.40px;font-size:16.3px;color:#404553;font-weight:400;">Enterprise (Paid)</span>
<div class="a" style="left:1448px;top:490px;width:108px;height:34.5px;background:#eceef4;border-radius:7px"></div>
<span class="t" style="left:1460.8px;top:499.42px;font-size:15.1px;color:#1f2430;font-weight:400;-webkit-text-stroke:0.35px #1f2430">Go to admin</span>
<svg class="a" style="left:384.5px;top:565px" width="44" height="44" viewBox="0 0 44 44">
<defs><clipPath id="ic565"><rect x="0" y="0" width="44" height="44" rx="5"/></clipPath></defs>
<g clip-path="url(#ic565)">
<rect x="0" y="0" width="44" height="44" fill="#e9eefd"/>
<rect x="6.2" y="7.5" width="31" height="29.8" fill="#fbfcff"/>
<rect x="0" y="36.3" width="44" height="7.7" fill="#e3e9fb"/>
</g>
<g>
<path d="M6 10.5 h5.2 v4.5 a2.6 2.6 0 0 1 -5.2 0z" fill="#d3ddfa"/>
<path d="M11.2 10.5 h5.2 v4.5 a2.6 2.6 0 0 1 -5.2 0z" fill="#97b0f6"/>
<path d="M16.4 10.5 h5.2 v4.5 a2.6 2.6 0 0 1 -5.2 0z" fill="#d3ddfa"/>
<path d="M21.6 10.5 h5.2 v4.5 a2.6 2.6 0 0 1 -5.2 0z" fill="#97b0f6"/>
<path d="M26.8 10.5 h5.2 v4.5 a2.6 2.6 0 0 1 -5.2 0z" fill="#d3ddfa"/>
<path d="M32 10.5 h5.2 v4.5 a2.6 2.6 0 0 1 -5.2 0z" fill="#97b0f6"/>
</g>
<rect x="9.8" y="22.3" width="8.5" height="6.3" fill="#e6ebfb"/>
<rect x="23" y="22.3" width="10.7" height="14.5" fill="#e9eefc"/>
</svg>
<div class="a" style="left:1057px;top:576px;width:63px;height:22.5px;background:#daf0e6;border:1px solid #c5e3d5;border-radius:12px;box-sizing:border-box"></div>
<div class="a" style="left:1066.5px;top:584.7px;width:4.5px;height:4.5px;background:#0e6b43;border-radius:50%"></div>
<span class="t" style="left:1075.8px;top:578.90px;font-size:14.3px;color:#46544e;font-weight:400;">Open</span>
<span class="t" style="left:1223.5px;top:568.20px;font-size:16.3px;color:#404553;font-weight:400;">Enterprise (Paid)</span>
<div class="a" style="left:1448px;top:570px;width:108px;height:34.5px;background:#eceef4;border-radius:7px"></div>
<span class="t" style="left:1460.8px;top:580.22px;font-size:15.1px;color:#1f2430;font-weight:400;-webkit-text-stroke:0.35px #1f2430">Go to admin</span>
<svg class="a" style="left:384.5px;top:646px" width="44" height="44" viewBox="0 0 44 44">
<defs><clipPath id="ic646"><rect x="0" y="0" width="44" height="44" rx="5"/></clipPath></defs>
<g clip-path="url(#ic646)">
<rect x="0" y="0" width="44" height="44" fill="#e9eefd"/>
<rect x="6.2" y="7.5" width="31" height="29.8" fill="#fbfcff"/>
<rect x="0" y="36.3" width="44" height="7.7" fill="#e3e9fb"/>
</g>
<g>
<path d="M6 10.5 h5.2 v4.5 a2.6 2.6 0 0 1 -5.2 0z" fill="#d3ddfa"/>
<path d="M11.2 10.5 h5.2 v4.5 a2.6 2.6 0 0 1 -5.2 0z" fill="#97b0f6"/>
<path d="M16.4 10.5 h5.2 v4.5 a2.6 2.6 0 0 1 -5.2 0z" fill="#d3ddfa"/>
<path d="M21.6 10.5 h5.2 v4.5 a2.6 2.6 0 0 1 -5.2 0z" fill="#97b0f6"/>
<path d="M26.8 10.5 h5.2 v4.5 a2.6 2.6 0 0 1 -5.2 0z" fill="#d3ddfa"/>
<path d="M32 10.5 h5.2 v4.5 a2.6 2.6 0 0 1 -5.2 0z" fill="#97b0f6"/>
</g>
<rect x="9.8" y="22.3" width="8.5" height="6.3" fill="#e6ebfb"/>
<rect x="23" y="22.3" width="10.7" height="14.5" fill="#e9eefc"/>
</svg>
<div class="a" style="left:1057px;top:656px;width:63px;height:22.5px;background:#daf0e6;border:1px solid #c5e3d5;border-radius:12px;box-sizing:border-box"></div>
<div class="a" style="left:1066.5px;top:665.5px;width:4.5px;height:4.5px;background:#0e6b43;border-radius:50%"></div>
<span class="t" style="left:1075.8px;top:659.70px;font-size:14.3px;color:#46544e;font-weight:400;">Open</span>
<span class="t" style="left:1223.5px;top:649.00px;font-size:16.3px;color:#404553;font-weight:400;">Enterprise (Paid)</span>
<div class="a" style="left:1448px;top:651px;width:108px;height:34.5px;background:#eceef4;border-radius:7px"></div>
<span class="t" style="left:1460.8px;top:661.02px;font-size:15.1px;color:#1f2430;font-weight:400;-webkit-text-stroke:0.35px #1f2430">Go to admin</span>
<i style="left:438px;top:337px;width:10px;height:11px;background:#c7d3f5"></i>
<i style="left:448px;top:337px;width:11px;height:11px;background:#c3cff5"></i>
<i style="left:459px;top:337px;width:11px;height:11px;background:#d0daf3"></i>
<i style="left:470px;top:337px;width:10px;height:11px;background:#d6def3"></i>
<i style="left:480px;top:337px;width:11px;height:11px;background:#bccbf3"></i>
<i style="left:491px;top:337px;width:11px;height:11px;background:#bccbf3"></i>
<i style="left:438px;top:348px;width:10px;height:10px;background:#ebeefa"></i>
<i style="left:448px;top:348px;width:11px;height:10px;background:#e8ecfa"></i>
<i style="left:459px;top:348px;width:11px;height:10px;background:#e8ecfa"></i>
<i style="left:470px;top:348px;width:10px;height:10px;background:#e6eaf8"></i>
<i style="left:480px;top:348px;width:11px;height:10px;background:#e8ecfa"></i>
<i style="left:491px;top:348px;width:11px;height:10px;background:#e8ecfa"></i>
<i style="left:619px;top:337px;width:10px;height:11px;background:#d3d3d6"></i>
<i style="left:629px;top:337px;width:11px;height:11px;background:#d6d6d9"></i>
<i style="left:640px;top:337px;width:10px;height:11px;background:#d6d6d9"></i>
<i style="left:650px;top:337px;width:11px;height:11px;background:#c6c6cc"></i>
<i style="left:661px;top:337px;width:11px;height:11px;background:#d0d0d3"></i>
<i style="left:672px;top:337px;width:10px;height:11px;background:#f0f0f0"></i>
<i style="left:619px;top:348px;width:10px;height:10px;background:#efeff4"></i>
<i style="left:629px;top:348px;width:11px;height:10px;background:#ebebf0"></i>
<i style="left:640px;top:348px;width:10px;height:10px;background:#ebebf0"></i>
<i style="left:650px;top:348px;width:11px;height:10px;background:#e7e7ec"></i>
<i style="left:661px;top:348px;width:11px;height:10px;background:#e7e7ec"></i>
<i style="left:672px;top:348px;width:10px;height:10px;background:#f9f9fe"></i>
<i style="left:799px;top:337px;width:11px;height:11px;background:#cbcbd0"></i>
<i style="left:810px;top:337px;width:10px;height:11px;background:#d8d8dd"></i>
<i style="left:820px;top:337px;width:11px;height:11px;background:#ceced3"></i>
<i style="left:831px;top:337px;width:11px;height:11px;background:#cbcbd0"></i>
<i style="left:842px;top:337px;width:10px;height:11px;background:#cbcbd0"></i>
<i style="left:852px;top:337px;width:11px;height:11px;background:#e5e5ea"></i>
<i style="left:863px;top:337px;width:11px;height:11px;background:#ceced3"></i>
<i style="left:874px;top:337px;width:10px;height:11px;background:#d8d8dd"></i>
<i style="left:884px;top:337px;width:11px;height:11px;background:#ceced3"></i>
<i style="left:895px;top:337px;width:11px;height:11px;background:#d2d2d7"></i>
<i style="left:906px;top:337px;width:10px;height:11px;background:#d2d2d7"></i>
<i style="left:916px;top:337px;width:11px;height:11px;background:#c8c8cd"></i>
<i style="left:927px;top:337px;width:10px;height:11px;background:#d8d8dd"></i>
<i style="left:937px;top:337px;width:11px;height:11px;background:#e7e7ec"></i>
<i style="left:948px;top:337px;width:11px;height:11px;background:#d8d8dd"></i>
<i style="left:959px;top:337px;width:10px;height:11px;background:#cbcbd0"></i>
<i style="left:799px;top:348px;width:11px;height:10px;background:#eeeef3"></i>
<i style="left:810px;top:348px;width:10px;height:10px;background:#e7e7ec"></i>
<i style="left:820px;top:348px;width:11px;height:10px;background:#f2f2f7"></i>
<i style="left:831px;top:348px;width:11px;height:10px;background:#eeeef3"></i>
<i style="left:842px;top:348px;width:10px;height:10px;background:#ebebf0"></i>
<i style="left:852px;top:348px;width:11px;height:10px;background:#f5f5fa"></i>
<i style="left:863px;top:348px;width:11px;height:10px;background:#f2f2f7"></i>
<i style="left:874px;top:348px;width:10px;height:10px;background:#ebebf0"></i>
<i style="left:884px;top:348px;width:11px;height:10px;background:#f7f7fc"></i>
<i style="left:895px;top:348px;width:11px;height:10px;background:#eeeef3"></i>
<i style="left:906px;top:348px;width:10px;height:10px;background:#efeff4"></i>
<i style="left:916px;top:348px;width:11px;height:10px;background:#f2f2f7"></i>
<i style="left:927px;top:348px;width:10px;height:10px;background:#f2f2f7"></i>
<i style="left:937px;top:348px;width:11px;height:10px;background:#efeff4"></i>
<i style="left:948px;top:348px;width:11px;height:10px;background:#f2f2f7"></i>
<i style="left:959px;top:348px;width:10px;height:10px;background:#f2f2f7"></i>
<i style="left:1224px;top:348px;width:11px;height:10px;background:#e7e7ec"></i>
<i style="left:1235px;top:348px;width:11px;height:10px;background:#e7e7ec"></i>
<i style="left:1246px;top:348px;width:10px;height:10px;background:#efeff4"></i>
<i style="left:1256px;top:348px;width:11px;height:10px;background:#e7e7ec"></i>
<i style="left:1267px;top:348px;width:11px;height:10px;background:#f2f2f7"></i>
<i style="left:1278px;top:348px;width:10px;height:10px;background:#ebebf0"></i>
<i style="left:1288px;top:348px;width:11px;height:10px;background:#dcdce1"></i>
<i style="left:1299px;top:348px;width:10px;height:10px;background:#efeff4"></i>
<i style="left:1309px;top:348px;width:11px;height:10px;background:#dcdce1"></i>
<i style="left:1224px;top:358px;width:11px;height:11px;background:#dfdfe4"></i>
<i style="left:1235px;top:358px;width:11px;height:11px;background:#dfdfe4"></i>
<i style="left:1246px;top:358px;width:10px;height:11px;background:#f2f2f7"></i>
<i style="left:1256px;top:358px;width:11px;height:11px;background:#dbdbe0"></i>
<i style="left:1267px;top:358px;width:11px;height:11px;background:#ebebf0"></i>
<i style="left:1278px;top:358px;width:10px;height:11px;background:#e2e2e7"></i>
<i style="left:1288px;top:358px;width:11px;height:11px;background:#efeff4"></i>
<i style="left:1299px;top:358px;width:10px;height:11px;background:#efeff4"></i>
<i style="left:1309px;top:358px;width:11px;height:11px;background:#dfdfe4"></i>
<i style="left:438px;top:411px;width:10px;height:11px;background:#f3f5fb"></i>
<i style="left:448px;top:411px;width:11px;height:11px;background:#e3ebf8"></i>
<i style="left:459px;top:411px;width:11px;height:11px;background:#ecf0fa"></i>
<i style="left:438px;top:422px;width:10px;height:11px;background:#d9e2f8"></i>
<i style="left:448px;top:422px;width:11px;height:11px;background:#d0dcf5"></i>
<i style="left:459px;top:422px;width:11px;height:11px;background:#bccbf0"></i>
<i style="left:640px;top:411px;width:10px;height:11px;background:#ebebf0"></i>
<i style="left:672px;top:411px;width:10px;height:11px;background:#f7f7fc"></i>
<i style="left:682px;top:411px;width:11px;height:11px;background:#f7f7fc"></i>
<i style="left:704px;top:411px;width:10px;height:11px;background:#f7f7fc"></i>
<i style="left:619px;top:422px;width:10px;height:11px;background:#d2d2d7"></i>
<i style="left:629px;top:422px;width:11px;height:11px;background:#cbcbd0"></i>
<i style="left:640px;top:422px;width:10px;height:11px;background:#cbcbd0"></i>
<i style="left:650px;top:422px;width:11px;height:11px;background:#d2d2d7"></i>
<i style="left:661px;top:422px;width:11px;height:11px;background:#c2c2c7"></i>
<i style="left:672px;top:422px;width:10px;height:11px;background:#d8d8dd"></i>
<i style="left:682px;top:422px;width:11px;height:11px;background:#c2c2c7"></i>
<i style="left:693px;top:422px;width:11px;height:11px;background:#bcbcc1"></i>
<i style="left:704px;top:422px;width:10px;height:11px;background:#cbcbd0"></i>
<i style="left:714px;top:422px;width:11px;height:11px;background:#d2d2d7"></i>
<i style="left:725px;top:422px;width:10px;height:11px;background:#cbcbd0"></i>
<i style="left:799px;top:411px;width:11px;height:11px;background:#fbfbff"></i>
<i style="left:810px;top:411px;width:10px;height:11px;background:#ebebf0"></i>
<i style="left:831px;top:411px;width:11px;height:11px;background:#f7f7fc"></i>
<i style="left:842px;top:411px;width:10px;height:11px;background:#f7f7fc"></i>
<i style="left:852px;top:411px;width:11px;height:11px;background:#f9f9fe"></i>
<i style="left:884px;top:411px;width:11px;height:11px;background:#f7f7fc"></i>
<i style="left:927px;top:411px;width:10px;height:11px;background:#f7f7fc"></i>
<i style="left:948px;top:411px;width:11px;height:11px;background:#f7f7fc"></i>
<i style="left:980px;top:411px;width:11px;height:11px;background:#f4f4f9"></i>
<i style="left:799px;top:422px;width:11px;height:11px;background:#c8c8cd"></i>
<i style="left:810px;top:422px;width:10px;height:11px;background:#cbcbd0"></i>
<i style="left:820px;top:422px;width:11px;height:11px;background:#cbcbd0"></i>
<i style="left:831px;top:422px;width:11px;height:11px;background:#d2d2d7"></i>
<i style="left:842px;top:422px;width:10px;height:11px;background:#c8c8cd"></i>
<i style="left:852px;top:422px;width:11px;height:11px;background:#cbcbd0"></i>
<i style="left:863px;top:422px;width:11px;height:11px;background:#cbcbd0"></i>
<i style="left:874px;top:422px;width:10px;height:11px;background:#b8b8bd"></i>
<i style="left:884px;top:422px;width:11px;height:11px;background:#d8d8dd"></i>
<i style="left:895px;top:422px;width:11px;height:11px;background:#b8b8bd"></i>
<i style="left:906px;top:422px;width:10px;height:11px;background:#dfdfe4"></i>
<i style="left:916px;top:422px;width:11px;height:11px;background:#cbcbd0"></i>
<i style="left:927px;top:422px;width:10px;height:11px;background:#cbcbd0"></i>
<i style="left:937px;top:422px;width:11px;height:11px;background:#c2c2c7"></i>
<i style="left:948px;top:422px;width:11px;height:11px;background:#cbcbd0"></i>
<i style="left:959px;top:422px;width:10px;height:11px;background:#b8b8bd"></i>
<i style="left:969px;top:422px;width:11px;height:11px;background:#cbcbd0"></i>
<i style="left:980px;top:422px;width:11px;height:11px;background:#c8c8cd"></i>
<i style="left:991px;top:422px;width:10px;height:11px;background:#d5d5da"></i>
<i style="left:1001px;top:422px;width:11px;height:11px;background:#d2d2d7"></i>
<i style="left:1012px;top:422px;width:10px;height:11px;background:#c2c2c7"></i>
<i style="left:1022px;top:422px;width:11px;height:11px;background:#e7e7ec"></i>
<i style="left:1224px;top:433px;width:11px;height:10px;background:#dbdbe0"></i>
<i style="left:1235px;top:433px;width:11px;height:10px;background:#dbdbe0"></i>
<i style="left:1246px;top:433px;width:10px;height:10px;background:#efeff4"></i>
<i style="left:1256px;top:433px;width:11px;height:10px;background:#d2d2d7"></i>
<i style="left:1267px;top:433px;width:11px;height:10px;background:#efeff4"></i>
<i style="left:1278px;top:433px;width:10px;height:10px;background:#e5e5ea"></i>
<i style="left:1288px;top:433px;width:11px;height:10px;background:#e5e5ea"></i>
<i style="left:1299px;top:433px;width:10px;height:10px;background:#efeff4"></i>
<i style="left:1309px;top:433px;width:11px;height:10px;background:#d2d2d7"></i>
<i style="left:438px;top:496px;width:10px;height:11px;background:#d6e0f8"></i>
<i style="left:448px;top:496px;width:11px;height:11px;background:#dce4f8"></i>
<i style="left:459px;top:496px;width:11px;height:11px;background:#dae2f8"></i>
<i style="left:470px;top:496px;width:10px;height:11px;background:#d6e0f5"></i>
<i style="left:480px;top:496px;width:11px;height:11px;background:#dce4f8"></i>
<i style="left:491px;top:496px;width:11px;height:11px;background:#c9d6f5"></i>
<i style="left:502px;top:496px;width:10px;height:11px;background:#dae2f8"></i>
<i style="left:512px;top:496px;width:11px;height:11px;background:#c6d3f3"></i>
<i style="left:523px;top:496px;width:10px;height:11px;background:#ecf0fa"></i>
<i style="left:438px;top:507px;width:10px;height:11px;background:#e8edfa"></i>
<i style="left:448px;top:507px;width:11px;height:11px;background:#d9e1f5"></i>
<i style="left:459px;top:507px;width:11px;height:11px;background:#e3e9f8"></i>
<i style="left:470px;top:507px;width:10px;height:11px;background:#d3ddf5"></i>
<i style="left:480px;top:507px;width:11px;height:11px;background:#eff2fb"></i>
<i style="left:491px;top:507px;width:11px;height:11px;background:#d3ddf5"></i>
<i style="left:502px;top:507px;width:10px;height:11px;background:#ecf0fa"></i>
<i style="left:512px;top:507px;width:11px;height:11px;background:#d6e0f5"></i>
<i style="left:523px;top:507px;width:10px;height:11px;background:#f3f5fb"></i>
<i style="left:619px;top:496px;width:10px;height:11px;background:#dfdfe4"></i>
<i style="left:629px;top:496px;width:11px;height:11px;background:#d8d8dd"></i>
<i style="left:640px;top:496px;width:10px;height:11px;background:#dbdbe0"></i>
<i style="left:650px;top:496px;width:11px;height:11px;background:#cfcfd4"></i>
<i style="left:661px;top:496px;width:11px;height:11px;background:#dbdbe0"></i>
<i style="left:672px;top:496px;width:10px;height:11px;background:#dbdbe0"></i>
<i style="left:682px;top:496px;width:11px;height:11px;background:#d5d5da"></i>
<i style="left:693px;top:496px;width:11px;height:11px;background:#ebebf0"></i>
<i style="left:619px;top:507px;width:10px;height:11px;background:#e5e5ea"></i>
<i style="left:629px;top:507px;width:11px;height:11px;background:#e2e2e7"></i>
<i style="left:640px;top:507px;width:10px;height:11px;background:#e7e7ec"></i>
<i style="left:650px;top:507px;width:11px;height:11px;background:#dbdbe0"></i>
<i style="left:661px;top:507px;width:11px;height:11px;background:#dbdbe0"></i>
<i style="left:672px;top:507px;width:10px;height:11px;background:#e7e7ec"></i>
<i style="left:682px;top:507px;width:11px;height:11px;background:#dfdfe4"></i>
<i style="left:693px;top:507px;width:11px;height:11px;background:#f2f2f7"></i>
<i style="left:799px;top:496px;width:11px;height:11px;background:#d5d5da"></i>
<i style="left:810px;top:496px;width:10px;height:11px;background:#ebebf0"></i>
<i style="left:820px;top:496px;width:11px;height:11px;background:#d5d5da"></i>
<i style="left:831px;top:496px;width:11px;height:11px;background:#d2d2d7"></i>
<i style="left:842px;top:496px;width:10px;height:11px;background:#d8d8dd"></i>
<i style="left:852px;top:496px;width:11px;height:11px;background:#dfdfe4"></i>
<i style="left:863px;top:496px;width:11px;height:11px;background:#d2d2d7"></i>
<i style="left:874px;top:496px;width:10px;height:11px;background:#eeeef3"></i>
<i style="left:884px;top:496px;width:11px;height:11px;background:#d8d8dd"></i>
<i style="left:895px;top:496px;width:11px;height:11px;background:#dbdbe0"></i>
<i style="left:906px;top:496px;width:10px;height:11px;background:#d8d8dd"></i>
<i style="left:916px;top:496px;width:11px;height:11px;background:#dfdfe4"></i>
<i style="left:927px;top:496px;width:10px;height:11px;background:#cfcfd4"></i>
<i style="left:937px;top:496px;width:11px;height:11px;background:#d2d2d7"></i>
<i style="left:948px;top:496px;width:11px;height:11px;background:#eeeef3"></i>
<i style="left:959px;top:496px;width:10px;height:11px;background:#dbdbe0"></i>
<i style="left:969px;top:496px;width:11px;height:11px;background:#d5d5da"></i>
<i style="left:980px;top:496px;width:11px;height:11px;background:#f2f2f7"></i>
<i style="left:991px;top:496px;width:10px;height:11px;background:#f7f7fc"></i>
<i style="left:799px;top:507px;width:11px;height:11px;background:#dbdbe0"></i>
<i style="left:810px;top:507px;width:10px;height:11px;background:#ebebf0"></i>
<i style="left:820px;top:507px;width:11px;height:11px;background:#e2e2e7"></i>
<i style="left:831px;top:507px;width:11px;height:11px;background:#dfdfe4"></i>
<i style="left:842px;top:507px;width:10px;height:11px;background:#dbdbe0"></i>
<i style="left:852px;top:507px;width:11px;height:11px;background:#efeff4"></i>
<i style="left:863px;top:507px;width:11px;height:11px;background:#d8d8dd"></i>
<i style="left:874px;top:507px;width:10px;height:11px;background:#ebebf0"></i>
<i style="left:884px;top:507px;width:11px;height:11px;background:#ebebf0"></i>
<i style="left:895px;top:507px;width:11px;height:11px;background:#dfdfe4"></i>
<i style="left:906px;top:507px;width:10px;height:11px;background:#ebebf0"></i>
<i style="left:916px;top:507px;width:11px;height:11px;background:#e2e2e7"></i>
<i style="left:927px;top:507px;width:10px;height:11px;background:#e2e2e7"></i>
<i style="left:937px;top:507px;width:11px;height:11px;background:#ebebf0"></i>
<i style="left:948px;top:507px;width:11px;height:11px;background:#ebebf0"></i>
<i style="left:959px;top:507px;width:10px;height:11px;background:#dfdfe4"></i>
<i style="left:969px;top:507px;width:11px;height:11px;background:#eeeef3"></i>
<i style="left:980px;top:507px;width:11px;height:11px;background:#f7f7fc"></i>
<i style="left:991px;top:507px;width:10px;height:11px;background:#f7f7fc"></i>
<i style="left:1224px;top:507px;width:11px;height:11px;background:#efeff4"></i>
<i style="left:1235px;top:507px;width:11px;height:11px;background:#efeff4"></i>
<i style="left:1246px;top:507px;width:10px;height:11px;background:#f5f5fa"></i>
<i style="left:1256px;top:507px;width:11px;height:11px;background:#efeff4"></i>
<i style="left:1267px;top:507px;width:11px;height:11px;background:#f2f2f7"></i>
<i style="left:1278px;top:507px;width:10px;height:11px;background:#f2f2f7"></i>
<i style="left:1288px;top:507px;width:11px;height:11px;background:#f5f5fa"></i>
<i style="left:1299px;top:507px;width:10px;height:11px;background:#f5f5fa"></i>
<i style="left:1309px;top:507px;width:11px;height:11px;background:#e2e2e7"></i>
<i style="left:1224px;top:518px;width:11px;height:10px;background:#e2e2e7"></i>
<i style="left:1235px;top:518px;width:11px;height:10px;background:#e2e2e7"></i>
<i style="left:1246px;top:518px;width:10px;height:10px;background:#efeff4"></i>
<i style="left:1256px;top:518px;width:11px;height:10px;background:#dfdfe4"></i>
<i style="left:1267px;top:518px;width:11px;height:10px;background:#e7e7ec"></i>
<i style="left:1278px;top:518px;width:10px;height:10px;background:#e5e5ea"></i>
<i style="left:1288px;top:518px;width:11px;height:10px;background:#efeff4"></i>
<i style="left:1299px;top:518px;width:10px;height:10px;background:#f2f2f7"></i>
<i style="left:1309px;top:518px;width:11px;height:10px;background:#dbdbe0"></i>
<i style="left:438px;top:581px;width:10px;height:11px;background:#d3dcf5"></i>
<i style="left:448px;top:581px;width:11px;height:11px;background:#c9d6f3"></i>
<i style="left:459px;top:581px;width:11px;height:11px;background:#a9bcf0"></i>
<i style="left:470px;top:581px;width:10px;height:11px;background:#d9e2f8"></i>
<i style="left:480px;top:581px;width:11px;height:11px;background:#b9c9f3"></i>
<i style="left:491px;top:581px;width:11px;height:11px;background:#c9d6f5"></i>
<i style="left:502px;top:581px;width:10px;height:11px;background:#adbff0"></i>
<i style="left:512px;top:581px;width:11px;height:11px;background:#c6d3f3"></i>
<i style="left:523px;top:581px;width:10px;height:11px;background:#b3c4f0"></i>
<i style="left:619px;top:581px;width:10px;height:11px;background:#c8c8cd"></i>
<i style="left:629px;top:581px;width:11px;height:11px;background:#ceced3"></i>
<i style="left:640px;top:581px;width:10px;height:11px;background:#c8c8cd"></i>
<i style="left:650px;top:581px;width:11px;height:11px;background:#d5d5da"></i>
<i style="left:661px;top:581px;width:11px;height:11px;background:#c2c2c7"></i>
<i style="left:672px;top:581px;width:10px;height:11px;background:#ceced3"></i>
<i style="left:682px;top:581px;width:11px;height:11px;background:#d2d2d7"></i>
<i style="left:693px;top:581px;width:11px;height:11px;background:#dbdbe0"></i>
<i style="left:799px;top:581px;width:11px;height:11px;background:#c2c2c7"></i>
<i style="left:810px;top:581px;width:10px;height:11px;background:#cfcfd4"></i>
<i style="left:820px;top:581px;width:11px;height:11px;background:#c8c8cd"></i>
<i style="left:831px;top:581px;width:11px;height:11px;background:#c8c8cd"></i>
<i style="left:842px;top:581px;width:10px;height:11px;background:#c5c5ca"></i>
<i style="left:852px;top:581px;width:11px;height:11px;background:#c5c5ca"></i>
<i style="left:863px;top:581px;width:11px;height:11px;background:#d8d8dd"></i>
<i style="left:874px;top:581px;width:10px;height:11px;background:#d2d2d7"></i>
<i style="left:884px;top:581px;width:11px;height:11px;background:#d5d5da"></i>
<i style="left:895px;top:581px;width:11px;height:11px;background:#c8c8cd"></i>
<i style="left:906px;top:581px;width:10px;height:11px;background:#c8c8cd"></i>
<i style="left:916px;top:581px;width:11px;height:11px;background:#d8d8dd"></i>
<i style="left:927px;top:581px;width:10px;height:11px;background:#c2c2c7"></i>
<i style="left:937px;top:581px;width:11px;height:11px;background:#c2c2c7"></i>
<i style="left:948px;top:581px;width:11px;height:11px;background:#cfcfd4"></i>
<i style="left:959px;top:581px;width:10px;height:11px;background:#d8d8dd"></i>
<i style="left:969px;top:581px;width:11px;height:11px;background:#d2d2d7"></i>
<i style="left:980px;top:581px;width:11px;height:11px;background:#c5c5ca"></i>
<i style="left:991px;top:581px;width:10px;height:11px;background:#e2e2e7"></i>
<i style="left:1224px;top:592px;width:11px;height:11px;background:#dbdbe0"></i>
<i style="left:1235px;top:592px;width:11px;height:11px;background:#dbdbe0"></i>
<i style="left:1246px;top:592px;width:10px;height:11px;background:#efeff4"></i>
<i style="left:1256px;top:592px;width:11px;height:11px;background:#d2d2d7"></i>
<i style="left:1267px;top:592px;width:11px;height:11px;background:#efeff4"></i>
<i style="left:1278px;top:592px;width:10px;height:11px;background:#e5e5ea"></i>
<i style="left:1288px;top:592px;width:11px;height:11px;background:#e5e5ea"></i>
<i style="left:1299px;top:592px;width:10px;height:11px;background:#efeff4"></i>
<i style="left:1309px;top:592px;width:11px;height:11px;background:#d2d2d7"></i>
<i style="left:438px;top:656px;width:10px;height:11px;background:#dde4f8"></i>
<i style="left:448px;top:656px;width:11px;height:11px;background:#e8edfa"></i>
<i style="left:459px;top:656px;width:11px;height:11px;background:#e3e9f8"></i>
<i style="left:470px;top:656px;width:10px;height:11px;background:#d6e0f8"></i>
<i style="left:480px;top:656px;width:11px;height:11px;background:#e6ebfa"></i>
<i style="left:491px;top:656px;width:11px;height:11px;background:#e6ebfa"></i>
<i style="left:502px;top:656px;width:10px;height:11px;background:#e3e9f8"></i>
<i style="left:512px;top:656px;width:11px;height:11px;background:#e3e9f8"></i>
<i style="left:523px;top:656px;width:10px;height:11px;background:#d9e2f8"></i>
<i style="left:533px;top:656px;width:11px;height:11px;background:#e6ebfa"></i>
<i style="left:544px;top:656px;width:11px;height:11px;background:#f0f3fc"></i>
<i style="left:438px;top:667px;width:10px;height:10px;background:#e6ebfa"></i>
<i style="left:448px;top:667px;width:11px;height:10px;background:#c6d3f3"></i>
<i style="left:459px;top:667px;width:11px;height:10px;background:#e6ebfa"></i>
<i style="left:470px;top:667px;width:10px;height:10px;background:#cbd7f5"></i>
<i style="left:480px;top:667px;width:11px;height:10px;background:#cbd7f5"></i>
<i style="left:491px;top:667px;width:11px;height:10px;background:#e3e9f8"></i>
<i style="left:502px;top:667px;width:10px;height:10px;background:#cbd7f5"></i>
<i style="left:512px;top:667px;width:11px;height:10px;background:#cbd7f5"></i>
<i style="left:523px;top:667px;width:10px;height:10px;background:#d9e2f8"></i>
<i style="left:533px;top:667px;width:11px;height:10px;background:#c9d6f3"></i>
<i style="left:544px;top:667px;width:11px;height:10px;background:#e3e9f8"></i>
<i style="left:619px;top:656px;width:10px;height:11px;background:#e2e2e7"></i>
<i style="left:629px;top:656px;width:11px;height:11px;background:#ebebf0"></i>
<i style="left:640px;top:656px;width:10px;height:11px;background:#e7e7ec"></i>
<i style="left:650px;top:656px;width:11px;height:11px;background:#d5d5da"></i>
<i style="left:661px;top:656px;width:11px;height:11px;background:#eeeef3"></i>
<i style="left:672px;top:656px;width:10px;height:11px;background:#dfdfe4"></i>
<i style="left:682px;top:656px;width:11px;height:11px;background:#ebebf0"></i>
<i style="left:693px;top:656px;width:11px;height:11px;background:#dbdbe0"></i>
<i style="left:704px;top:656px;width:10px;height:11px;background:#e7e7ec"></i>
<i style="left:714px;top:656px;width:11px;height:11px;background:#eeeef3"></i>
<i style="left:619px;top:667px;width:10px;height:10px;background:#dbdbe0"></i>
<i style="left:629px;top:667px;width:11px;height:10px;background:#cfcfd4"></i>
<i style="left:640px;top:667px;width:10px;height:10px;background:#e5e5ea"></i>
<i style="left:650px;top:667px;width:11px;height:10px;background:#d2d2d7"></i>
<i style="left:661px;top:667px;width:11px;height:10px;background:#dfdfe4"></i>
<i style="left:672px;top:667px;width:10px;height:10px;background:#d8d8dd"></i>
<i style="left:682px;top:667px;width:11px;height:10px;background:#e7e7ec"></i>
<i style="left:693px;top:667px;width:11px;height:10px;background:#d8d8dd"></i>
<i style="left:704px;top:667px;width:10px;height:10px;background:#dfdfe4"></i>
<i style="left:714px;top:667px;width:11px;height:10px;background:#e2e2e7"></i>
<i style="left:799px;top:656px;width:11px;height:11px;background:#dfdfe4"></i>
<i style="left:810px;top:656px;width:10px;height:11px;background:#eeeef3"></i>
<i style="left:820px;top:656px;width:11px;height:11px;background:#e5e5ea"></i>
<i style="left:831px;top:656px;width:11px;height:11px;background:#e2e2e7"></i>
<i style="left:842px;top:656px;width:10px;height:11px;background:#dfdfe4"></i>
<i style="left:852px;top:656px;width:11px;height:11px;background:#ebebf0"></i>
<i style="left:863px;top:656px;width:11px;height:11px;background:#e5e5ea"></i>
<i style="left:874px;top:656px;width:10px;height:11px;background:#dfdfe4"></i>
<i style="left:884px;top:656px;width:11px;height:11px;background:#e5e5ea"></i>
<i style="left:895px;top:656px;width:11px;height:11px;background:#efeff4"></i>
<i style="left:906px;top:656px;width:10px;height:11px;background:#dbdbe0"></i>
<i style="left:916px;top:656px;width:11px;height:11px;background:#f2f2f7"></i>
<i style="left:927px;top:656px;width:10px;height:11px;background:#dfdfe4"></i>
<i style="left:937px;top:656px;width:11px;height:11px;background:#e7e7ec"></i>
<i style="left:948px;top:656px;width:11px;height:11px;background:#e5e5ea"></i>
<i style="left:959px;top:656px;width:10px;height:11px;background:#d8d8dd"></i>
<i style="left:969px;top:656px;width:11px;height:11px;background:#ebebf0"></i>
<i style="left:980px;top:656px;width:11px;height:11px;background:#f2f2f7"></i>
<i style="left:991px;top:656px;width:10px;height:11px;background:#e2e2e7"></i>
<i style="left:1001px;top:656px;width:11px;height:11px;background:#e5e5ea"></i>
<i style="left:1012px;top:656px;width:10px;height:11px;background:#f5f5fa"></i>
<i style="left:799px;top:667px;width:11px;height:10px;background:#dbdbe0"></i>
<i style="left:810px;top:667px;width:10px;height:10px;background:#d8d8dd"></i>
<i style="left:820px;top:667px;width:11px;height:10px;background:#e2e2e7"></i>
<i style="left:831px;top:667px;width:11px;height:10px;background:#dbdbe0"></i>
<i style="left:842px;top:667px;width:10px;height:10px;background:#cfcfd4"></i>
<i style="left:852px;top:667px;width:11px;height:10px;background:#dfdfe4"></i>
<i style="left:863px;top:667px;width:11px;height:10px;background:#dfdfe4"></i>
<i style="left:874px;top:667px;width:10px;height:10px;background:#dfdfe4"></i>
<i style="left:884px;top:667px;width:11px;height:10px;background:#dbdbe0"></i>
<i style="left:895px;top:667px;width:11px;height:10px;background:#e5e5ea"></i>
<i style="left:906px;top:667px;width:10px;height:10px;background:#d8d8dd"></i>
<i style="left:916px;top:667px;width:11px;height:10px;background:#dbdbe0"></i>
<i style="left:927px;top:667px;width:10px;height:10px;background:#e5e5ea"></i>
<i style="left:937px;top:667px;width:11px;height:10px;background:#d2d2d7"></i>
<i style="left:948px;top:667px;width:11px;height:10px;background:#d8d8dd"></i>
<i style="left:959px;top:667px;width:10px;height:10px;background:#dfdfe4"></i>
<i style="left:969px;top:667px;width:11px;height:10px;background:#e5e5ea"></i>
<i style="left:980px;top:667px;width:11px;height:10px;background:#dfdfe4"></i>
<i style="left:991px;top:667px;width:10px;height:10px;background:#d5d5da"></i>
<i style="left:1001px;top:667px;width:11px;height:10px;background:#f2f2f7"></i>
<i style="left:1012px;top:667px;width:10px;height:10px;background:#f2f2f7"></i>
<i style="left:1224px;top:667px;width:11px;height:10px;background:#f2f2f7"></i>
<i style="left:1235px;top:667px;width:11px;height:10px;background:#f2f2f7"></i>
<i style="left:1246px;top:667px;width:10px;height:10px;background:#f5f5fa"></i>
<i style="left:1256px;top:667px;width:11px;height:10px;background:#efeff4"></i>
<i style="left:1267px;top:667px;width:11px;height:10px;background:#f2f2f7"></i>
<i style="left:1278px;top:667px;width:10px;height:10px;background:#f2f2f7"></i>
<i style="left:1288px;top:667px;width:11px;height:10px;background:#f5f5fa"></i>
<i style="left:1299px;top:667px;width:10px;height:10px;background:#f2f2f7"></i>
<i style="left:1309px;top:667px;width:11px;height:10px;background:#e7e7ec"></i>
<i style="left:1224px;top:677px;width:11px;height:11px;background:#e2e2e7"></i>
<i style="left:1235px;top:677px;width:11px;height:11px;background:#e2e2e7"></i>
<i style="left:1246px;top:677px;width:10px;height:11px;background:#efeff4"></i>
<i style="left:1256px;top:677px;width:11px;height:11px;background:#d8d8dd"></i>
<i style="left:1267px;top:677px;width:11px;height:11px;background:#e7e7ec"></i>
<i style="left:1278px;top:677px;width:10px;height:11px;background:#dfdfe4"></i>
<i style="left:1288px;top:677px;width:11px;height:11px;background:#e2e2e7"></i>
<i style="left:1299px;top:677px;width:10px;height:11px;background:#efeff4"></i>
<i style="left:1309px;top:677px;width:11px;height:11px;background:#dbdbe0"></i>
<div class="a" style="left:1472.5px;top:721.5px;width:35px;height:35px;border:1.5px solid #dfe2e8;border-radius:6px;box-sizing:border-box;background:#f7f8fa"></div>
<svg class="a" style="left:1480px;top:729px" width="20" height="20"><path d="M12 5.5 L7.5 10 L12 14.5" fill="none" stroke="#9a9ea8" stroke-width="1.5" stroke-linecap="round" stroke-linejoin="round"/></svg>
<div class="a" style="left:1516.5px;top:721.5px;width:35px;height:35px;border:1.5px solid #5b7fd6;border-radius:6px;box-sizing:border-box;background:#eff4fe"></div>
<svg class="a" style="left:1524px;top:729px" width="20" height="20"><path d="M6.8 7.2 L10.4 4.8 V15.8" fill="none" stroke="#3462d6" stroke-width="2.1" stroke-linejoin="round"/></svg>
<div class="a" style="left:1560.5px;top:721.5px;width:35px;height:35px;border:1.5px solid #dfe2e8;border-radius:6px;box-sizing:border-box;background:#f7f8fa"></div>
<svg class="a" style="left:1568px;top:729px" width="20" height="20"><path d="M8 5.5 L12.5 10 L8 14.5" fill="none" stroke="#9a9ea8" stroke-width="1.5" stroke-linecap="round" stroke-linejoin="round"/></svg>
<svg class="a" style="left:280px;top:36px" width="290" height="140" viewBox="280 36 290 140">
<defs><linearGradient id="ag" x1="287" y1="0" x2="559" y2="0" gradientUnits="userSpaceOnUse">
<stop offset="0" stop-color="#3068fe"/><stop offset="1" stop-color="#c0d4fe"/></linearGradient>
<filter id="bl" x="-5%" y="-5%" width="110%" height="110%"><feGaussianBlur stdDeviation="0.45"/></filter></defs>
<rect x="352" y="125" width="208" height="5.5" fill="#f0f0f3" filter="url(#bl)"/>
<rect x="352" y="125" width="208" height="2.5" fill="#dce9fd" filter="url(#bl)"/>
<g filter="url(#bl)" fill="url(#ag)">
<path d="M351 84 H559.5 V125.5 H351 Z"/>
<path d="M287 105 L352 41.8 V168 Z"/>
</g></svg>
</body></html>
